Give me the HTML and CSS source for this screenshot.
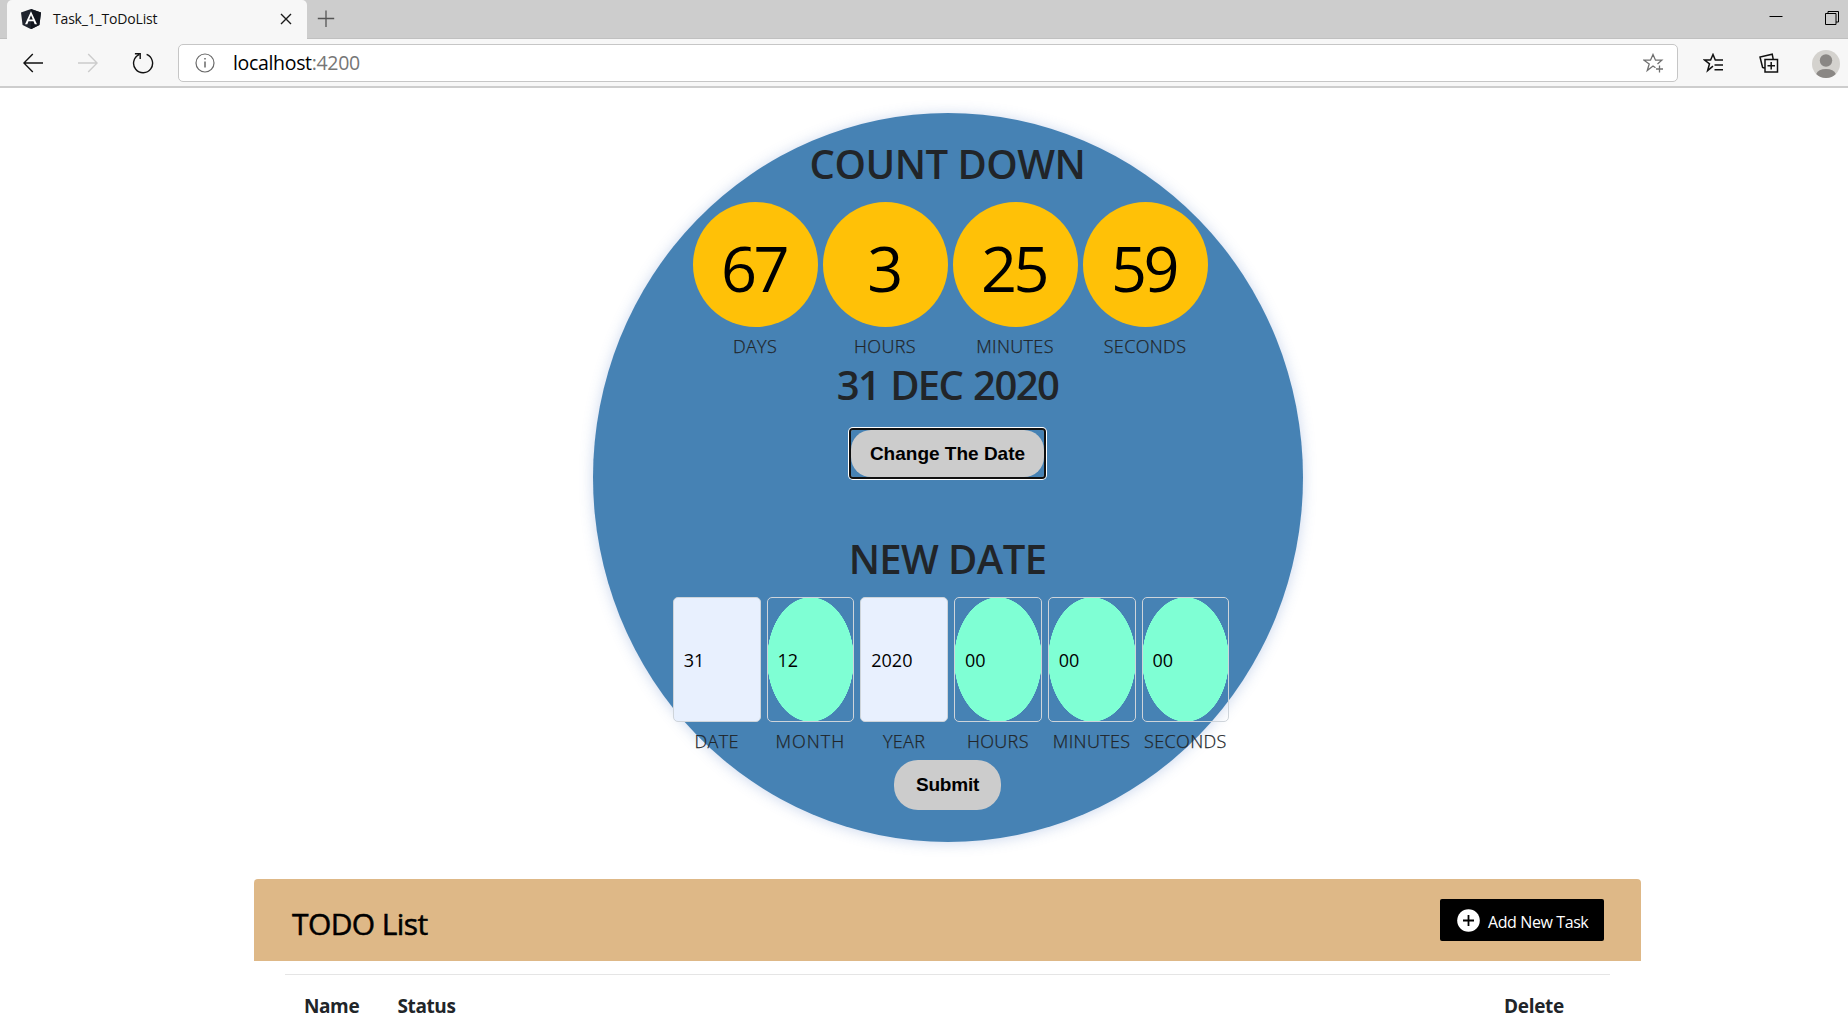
FILE: index.html
```html
<!DOCTYPE html>
<html lang="en">
<head>
<meta charset="utf-8">
<title>Task_1_ToDoList</title>
<link rel="stylesheet" href="styles.css">
</head>
<body>
<header class="browser">
  <div class="tabstrip">
    <div class="tab">
      <svg class="logo" width="20" height="20" viewBox="0 0 20 20"><path d="M10 0L20 3.4 18.4 16 10 20.2 1.6 16 0 3.4Z" fill="#20252f"/><path d="M10 0L20 3.4 18.4 16 10 20.2Z" fill="#12161f"/><path fill="#fff" fill-rule="evenodd" d="M10 2.3L4 15.3h2.3l1.2-3h5l1.2 3H16ZM10 6.2l1.8 4.2H8.2Z"/></svg>
      <span class="tab-title">Task_1_ToDoList</span>
      <svg class="close" width="12" height="12" viewBox="0 0 12 12" fill="none" stroke="#1a1a1a" stroke-width="1.4"><path d="M1 1l10 10M11 1L1 11"/></svg>
    </div>
    <svg class="newtab" width="18" height="18" viewBox="0 0 18 18" fill="none" stroke="#555" stroke-width="1.3"><path d="M.8 8.5h16.4M9 .5v16.4"/></svg>
    <svg class="minimise" width="14" height="14" viewBox="0 0 14 14" fill="none" stroke="#000"><path d="M.5 4.5h13"/></svg>
    <svg class="restore" width="14" height="14" viewBox="0 0 14 14" fill="none" stroke="#000"><path d="M.5 2.5h10.5v11H.5ZM3 2.5V.5h10.500v10.500H11"/></svg>
  </div>
  <div class="toolbar">
    <svg class="back" width="20" height="20" viewBox="0 0 20 20" fill="none" stroke="#111" stroke-width="1.4"><path d="M20 10H1M9.800 1L.900 10l8.900 9"/></svg>
    <svg class="forward" width="20" height="20" viewBox="0 0 20 20" fill="none" stroke="#ccc" stroke-width="1.400"><path d="M0 10h19M10.200 1l8.900 9-8.900 9"/></svg>
    <svg class="reload" width="22" height="22" viewBox="0 0 22 22" fill="none" stroke="#111" stroke-width="1.400"><path d="M14.600 2.400A9.500 9.500 0 1 1 7.100 2.600M2.900 1.800h5.300v5.300"/></svg>
    <div class="address">
      <svg width="20" height="20" viewBox="0 0 20 20" fill="none" stroke="#6a6a6a" stroke-width="1.200"><circle cx="10" cy="10" r="9"/><path d="M10 8.500v6M10 5v1.600" stroke-width="1.500"/></svg>
      <span class="url">localhost<span class="port">:4200</span></span>
      <svg class="star" width="21" height="21" viewBox="0 0 21 21" fill="none" stroke="#707070" stroke-width="1.300"><path d="M12.500 14.700L10 13l-5.700 4.500L6.200 11 1 7.200h6.500L10 1.500l2.500 5.700h6.300L14.500 11M16.500 12.500v7M13 16h7"/></svg>
    </div>
    <svg class="favs" width="21" height="20" viewBox="0 0 21 20" fill="none" stroke="#111" stroke-width="1.500"><path d="M10 13.200L4.600 17.600 6.500 10.800 1.500 7H7.600L10 1.500 12.300 7H20M11.500 12H20M11.500 16.700H20"/></svg>
    <svg class="collections" width="20" height="20" viewBox="0 0 20 20" fill="none" stroke="#111" stroke-width="1.500"><path d="M6 6.500h12.500V19H6ZM12.200 9v7.500M8.500 12.700H16M6 15.300L3.600 14.500 1 4 13.200 1.200l1 5"/></svg>
    <svg class="avatar" width="28" height="28" viewBox="0 0 28 28"><circle cx="14" cy="14" r="14" fill="#d4d2ce"/><circle cx="14" cy="10.500" r="6.200" fill="#8a8784"/><path d="M4.200 24a10.200 7 0 0 1 19.600 0A14 14 0 0 1 4.200 24Z" fill="#8a8784"/></svg>
  </div>
</header>
<main class="page">
  <section class="disc">
    <h1 class="heading count-title">COUNT DOWN</h1>
    <div class="counters">
      <div class="unit"><div class="ball">67</div><span>DAYS</span></div>
      <div class="unit"><div class="ball">3</div><span>HOURS</span></div>
      <div class="unit"><div class="ball">25</div><span>MINUTES</span></div>
      <div class="unit"><div class="ball">59</div><span>SECONDS</span></div>
    </div>
    <h1 class="heading target">31 DEC 2020</h1>
    <div class="focus-ring"><button class="pill change">Change The Date</button></div>
    <h1 class="heading new-title">NEW DATE</h1>
    <div class="fields">
      <label class="field"><input class="filled" value="31"><span>DATE</span></label>
      <label class="field"><input value="12"><span class="wide">MONTH</span></label>
      <label class="field"><input class="filled" value="2020"><span>YEAR</span></label>
      <label class="field"><input value="00"><span>HOURS</span></label>
      <label class="field"><input value="00"><span>MINUTES</span></label>
      <label class="field"><input value="00"><span>SECONDS</span></label>
    </div>
    <button class="pill submit">Submit</button>
  </section>
  <section class="todo">
    <div class="todo-head">
      <h2>TODO List</h2>
      <button class="add"><svg width="23" height="23" viewBox="0 0 23 23"><circle cx="11.500" cy="11.500" r="11.300" fill="#fff"/><path d="M11.500 6v11M6 11.500h11" stroke="#000" stroke-width="1.800"/></svg><span>Add New Task</span></button>
    </div>
    <div class="columns"><span class="name">Name</span><span>Status</span><span class="delete">Delete</span></div>
  </section>
</main>
</body>
</html>
```
FILE: styles.css
```css
* { box-sizing: border-box; }
html, body { margin: 0; height: 100%; overflow: hidden; background: #fff; }
body { font-family: "Open Sans", "Noto Sans", sans-serif; color: #212529; }
svg { display: block; flex: none; }
h1, h2 { margin: 0; }
button { border: 0; padding: 0; }

.browser { height: 88px; border-bottom: 2px solid #cdcdcd; background: #f7f7f7; }
.tabstrip { display: flex; height: 39px; padding-left: 7px; background: #cdcdcd; border-bottom: 1px solid #c0c0c0; }
.tab { display: flex; align-items: center; width: 300px; height: 39px; padding: 0 15px 1px 14px; background: #f7f7f7; border-radius: 5px 5px 0 0; }
.tab-title { margin-left: 12px; font-size: 14px; line-height: 20px; letter-spacing: -.18px; color: #111; }
.close { margin-left: auto; }
.newtab { margin: 10px 0 0 10px; }
.minimise { margin: 12px 0 0 auto; }
.restore { margin: 11px 9px 0 42px; }
.toolbar { display: flex; align-items: center; height: 47px; }
.back { margin-left: 23px; }
.forward { margin-left: 35px; }
.reload { margin-left: 34px; }
.address { display: flex; align-items: center; width: 1500px; height: 38px; margin: 1px 0 0 24px; padding: 0 13px 0 16px; border: 1px solid #c6c6c6; border-radius: 5px; background: #fff; }
.url { margin-left: 18px; font-size: 19.5px; line-height: 28px; letter-spacing: -.33px; color: #000; }
.port { color: #767676; }
.star { margin-left: auto; }
.favs { margin-left: 25px; }
.collections { margin-left: 35px; }
.avatar { margin-left: 33px; margin-top: 2px; }

.page { display: flex; flex-direction: column; align-items: center; width: 1895px; padding-top: 25px; }
.disc { display: flex; flex-direction: column; align-items: center; width: 710px; height: 729px; padding-top: 27px; border-radius: 50%; background: steelblue; box-shadow: 0 1px 14px rgba(70, 110, 190, .28); }
.heading { font-size: 40px; font-weight: 600; line-height: 48px; letter-spacing: -.5px; }
.target { margin-top: 3px; letter-spacing: -1.6px; word-spacing: 2px; }
.new-title { margin-top: 58px; letter-spacing: -.6px; }
.counters { display: flex; gap: 5px; margin: 14px 0 0 5px; }
.unit { display: flex; flex-direction: column; align-items: center; width: 125px; }
.ball { width: 125px; height: 125px; border-radius: 50%; background: #ffc107; color: #000; font-size: 63px; line-height: 131px; text-align: center; letter-spacing: -3.5px; text-indent: -3px; }
.unit span, .field span { margin-top: 7px; font-size: 18px; font-weight: 300; line-height: 24px; letter-spacing: .35px; white-space: nowrap; -webkit-text-stroke: .25px #212529; }
.focus-ring { margin-top: 21px; border-radius: 2px; box-shadow: 0 0 0 2px #101010, 0 0 0 3px #fff; }
.pill { display: block; background: #ccc; color: #000; font: bold 19px "Liberation Sans", Arial, sans-serif; }
.change { width: 193px; height: 47px; border-radius: 20px; }
.submit { width: 107px; height: 50px; margin-top: 7px; border-radius: 24px; letter-spacing: -.2px; }
.fields { display: flex; gap: 6px; margin: 14px 0 0 7px; }
.field { display: flex; flex-direction: column; align-items: center; width: 87.75px; }
.field input { width: 100%; height: 125px; padding: 1px 10px 0; border: 1px solid #ced4da; border-radius: 5px; background: radial-gradient(closest-side, #7fffd4 99%, transparent 100%) border-box; font: 18px "Open Sans", sans-serif; color: #000; outline: 0; }
.field .filled { background: #e8f0fe; }
.field .wide { letter-spacing: 1px; }

.todo { width: 1387px; margin-top: 37px; }
.todo-head { display: flex; height: 82px; padding: 20px 37px 0 38px; border-radius: 4px 4px 0 0; background: burlywood; color: #000; }
.todo h2 { font-size: 30px; font-weight: 500; line-height: 40px; letter-spacing: -.6px; margin-top: 5px; -webkit-text-stroke: .5px #000; }
.add { display: flex; width: 164px; height: 42px; margin-left: auto; padding: 9.5px 0 0 17px; border-radius: 2px; background: #000; color: #fff; font: 16px/24px "Open Sans", sans-serif; letter-spacing: -.4px; white-space: nowrap; }
.add span { margin: 1.5px 0 0 8px; }
.columns { display: flex; margin: 13px 31px 0; padding: 18px 46px 0 19px; border-top: 1px solid #e5e5e5; font-size: 19px; font-weight: 700; line-height: 26px; letter-spacing: -.4px; }
.name { width: 93.5px; }
.delete { margin-left: auto; letter-spacing: -.3px; }
```
